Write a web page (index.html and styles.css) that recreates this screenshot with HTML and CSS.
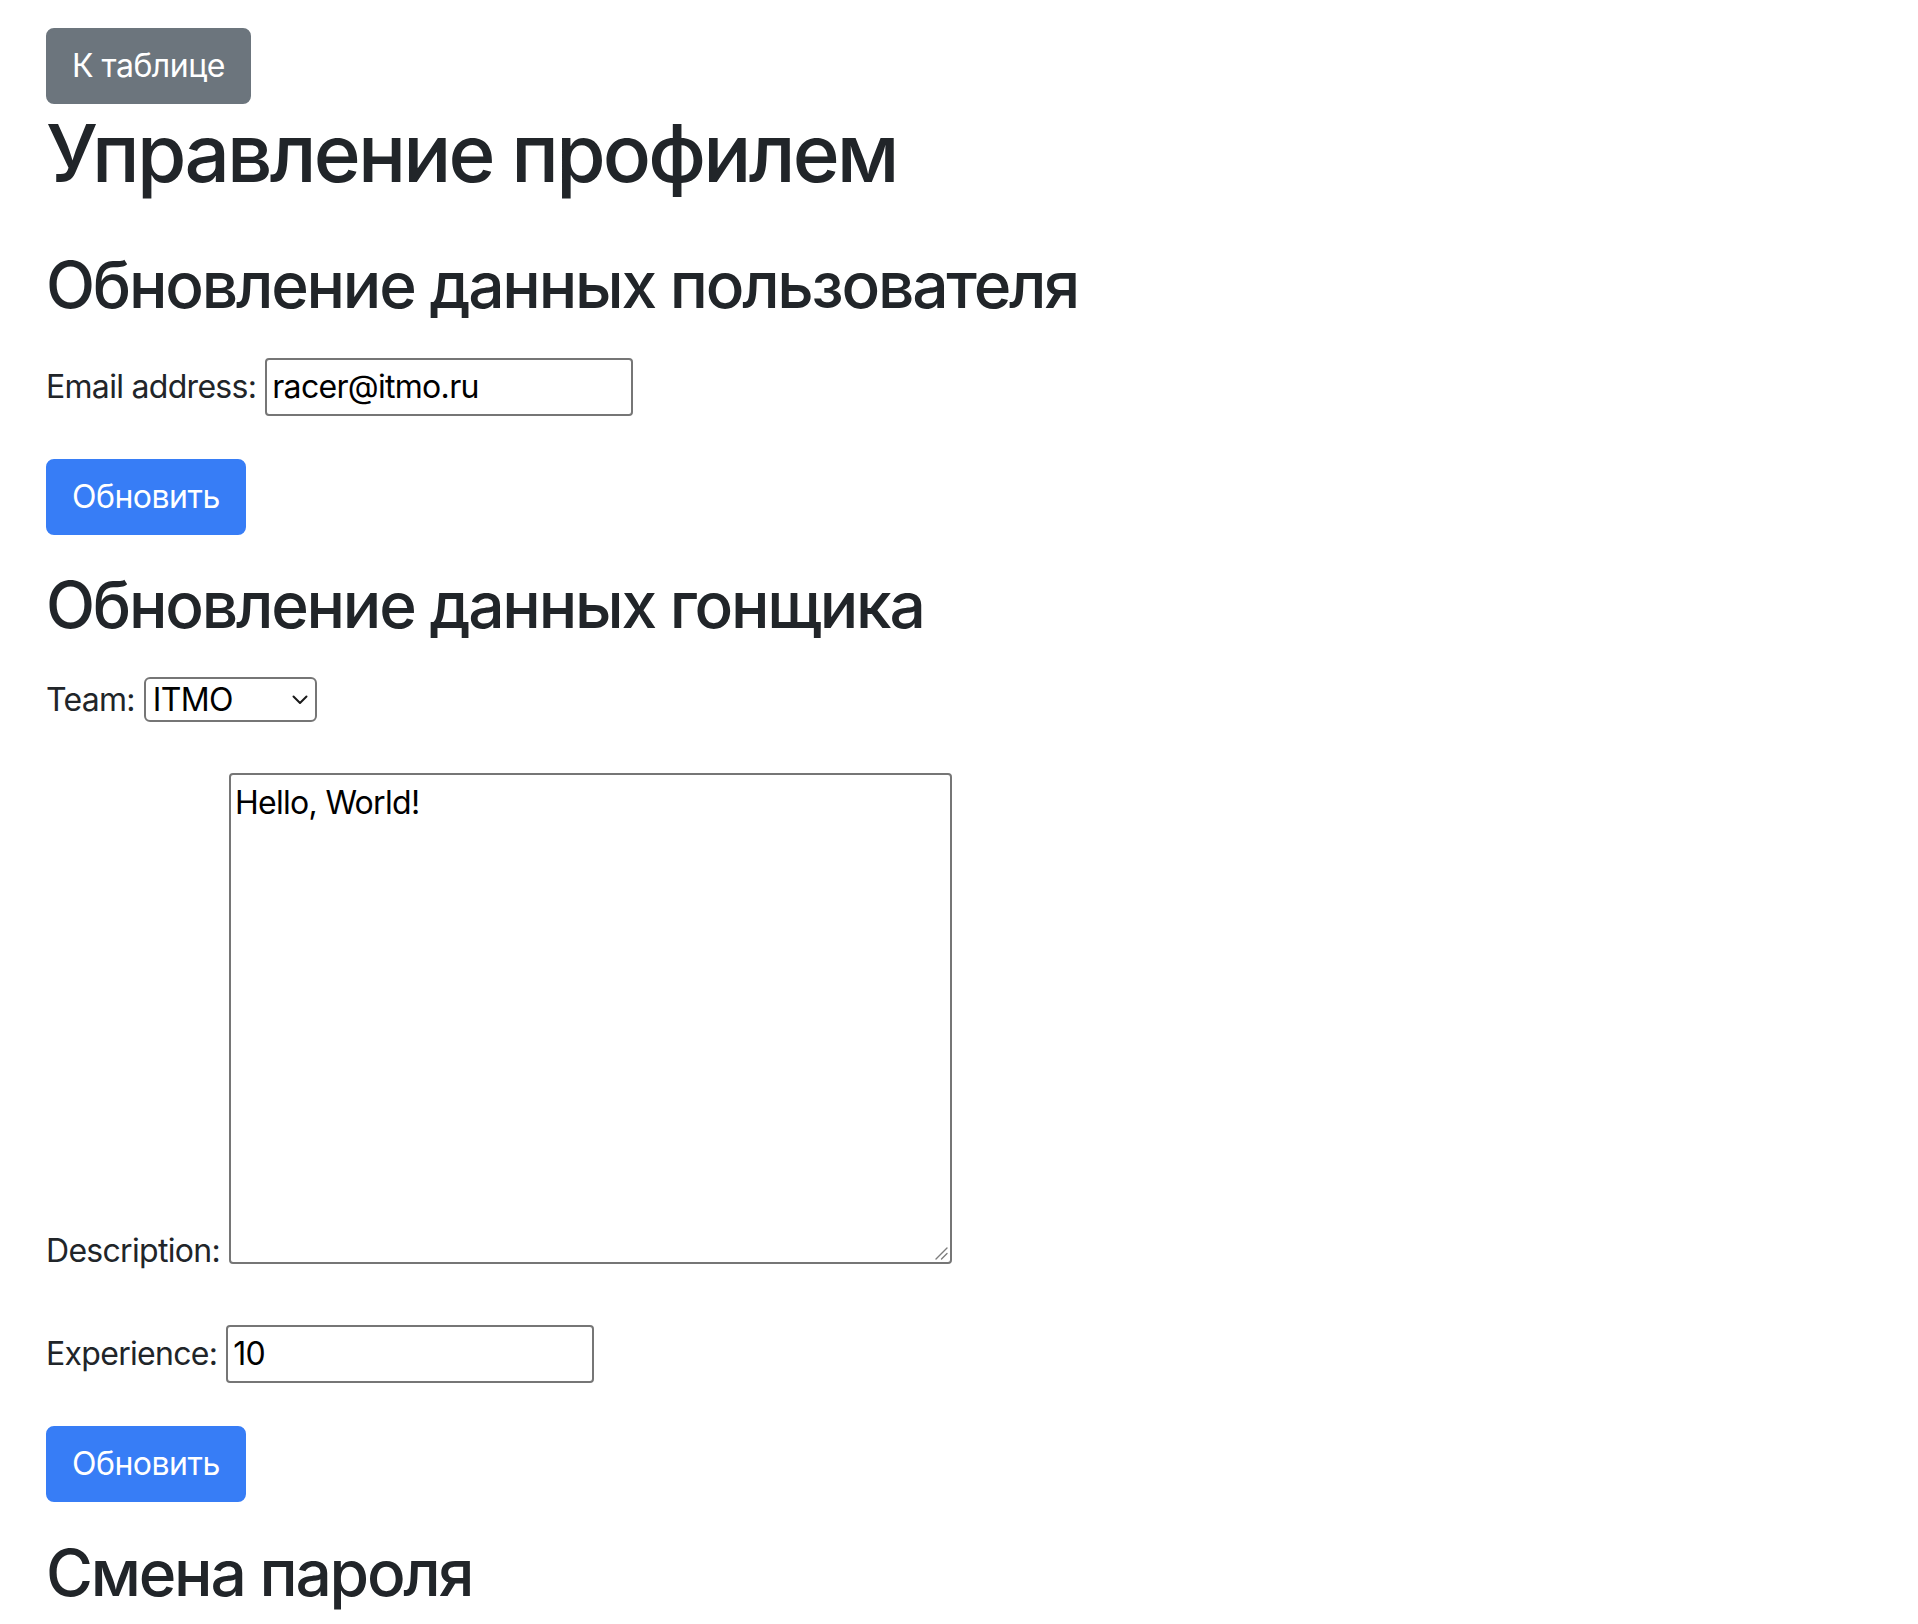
FILE: index.html
```html
<!DOCTYPE html>
<html lang="ru">
<head>
<meta charset="utf-8">
<title>Управление профилем</title>
<link rel="stylesheet" href="styles.css">
</head>
<body>
<div class="page">
  <div class="top-bar">
    <a class="btn btn-secondary" href="#">К таблице</a>
  </div>
  <h1 class="page-title">Управление профилем</h1>

  <form class="section">
    <h2 class="section-title section-title--first">Обновление данных пользователя</h2>
    <div class="field field--email">
      <label class="field-label" for="email">Email address:</label>
      <input class="text-input" id="email" type="email" value="racer@itmo.ru">
    </div>
    <button class="btn btn-primary btn-submit" type="button">Обновить</button>
  </form>

  <form class="section">
    <h2 class="section-title section-title--next">Обновление данных гонщика</h2>
    <div class="field field--team">
      <label class="field-label" for="team">Team:</label>
      <div class="select-wrap">
        <select class="select-input" id="team">
          <option>ITMO</option>
        </select>
        <svg class="select-chevron" width="16" height="10" viewBox="0 0 16 10" aria-hidden="true"><path d="M1.5 1.5 L8 8 L14.5 1.5" fill="none" stroke="#1a1a1a" stroke-width="2" stroke-linecap="round" stroke-linejoin="round"/></svg>
      </div>
    </div>
    <div class="field field--desc">
      <label class="field-label field-label--bottom" for="desc">Description:</label>
      <div class="area-wrap">
        <textarea class="text-area" id="desc">Hello, World!</textarea>
        <svg class="area-grip" width="14" height="14" viewBox="0 0 14 14" aria-hidden="true"><path d="M13 2 L2 13 M13 7.5 L7.5 13" fill="none" stroke="#7d7d7d" stroke-width="1.4" stroke-linecap="round"/></svg>
      </div>
    </div>
    <div class="field field--exp">
      <label class="field-label" for="exp">Experience:</label>
      <input class="text-input" id="exp" type="text" value="10">
    </div>
    <button class="btn btn-primary btn-submit" type="button">Обновить</button>
  </form>

  <form class="section">
    <h2 class="section-title section-title--last">Смена пароля</h2>
  </form>
</div>
</body>
</html>
```
FILE: styles.css
```css
html, body {
  margin: 0;
  padding: 0;
  background: #ffffff;
}

body {
  font-family: Inter, "Noto Sans", sans-serif;
  font-size: 32px;
  line-height: 48px;
  letter-spacing: -0.7px;
  color: #212529;
}

.page {
  padding: 0 46px 40px;
}

.top-bar {
  display: flex;
  padding-top: 28px;
}

.btn {
  display: inline-block;
  box-sizing: border-box;
  height: 76px;
  padding: 12px 24px;
  border: 2px solid transparent;
  border-radius: 8px;
  font-family: Inter, "Noto Sans", sans-serif;
  font-size: 32px;
  line-height: 48px;
  letter-spacing: -0.5px;
  font-weight: 400;
  color: #ffffff;
  text-decoration: none;
  cursor: pointer;
}

.btn-secondary {
  background: #6c757d;
  border-color: #6c757d;
}

.btn-primary {
  background: #377df6;
  border-color: #377df6;
}

.page-title {
  margin: 1px 0 0;
  font-size: 80px;
  line-height: 96px;
  font-weight: 500;
  letter-spacing: -2.8px;
}

.section {
  display: flex;
  flex-direction: column;
  align-items: flex-start;
  margin: 0;
}

.section-title {
  margin: 0;
  font-size: 64px;
  line-height: 76.8px;
  font-weight: 500;
  letter-spacing: -2.2px;
}

.section-title--first { margin-top: 46px; }
.section-title--next { margin-top: 32px; }
.section-title--last { margin-top: 33px; }

.field {
  display: flex;
  align-items: center;
  gap: 9px;
}

.field--email { margin-top: 34px; }
.field--team { margin-top: 32px; }
.field--desc { margin-top: 49px; align-items: flex-end; }
.field--exp { margin-top: 61px; }

.btn-submit { margin-top: 43px; }

.field-label {
  color: #212529;
}

.field-label--bottom {
  line-height: 26px;
}

.text-input {
  box-sizing: border-box;
  width: 368px;
  height: 58px;
  margin: 0;
  padding: 3px 5px;
  border: 2px solid #767676;
  border-radius: 4px;
  font-family: Inter, "Noto Sans", sans-serif;
  font-size: 32px;
  line-height: 48px;
  letter-spacing: -0.7px;
  color: #000000;
  background: #ffffff;
  outline: none;
}

.select-wrap {
  position: relative;
  display: flex;
}

.select-input {
  box-sizing: border-box;
  width: 173px;
  height: 45px;
  margin: 0;
  padding: 0 0 0 7px;
  border: 2px solid #767676;
  border-radius: 6px;
  font-family: Inter, "Noto Sans", sans-serif;
  font-size: 32px;
  line-height: 41px;
  letter-spacing: -0.7px;
  color: #000000;
  background: #ffffff;
  -webkit-appearance: none;
  appearance: none;
  outline: none;
}

.select-chevron {
  position: absolute;
  right: 9px;
  top: 18px;
  pointer-events: none;
}

.area-wrap {
  position: relative;
  display: flex;
}

.text-area {
  box-sizing: border-box;
  width: 723px;
  height: 491px;
  margin: 0;
  padding: 4px;
  border: 2px solid #767676;
  border-radius: 4px;
  font-family: Inter, "Noto Sans", sans-serif;
  font-size: 32px;
  line-height: 48px;
  letter-spacing: -0.7px;
  color: #000000;
  background: #ffffff;
  outline: none;
  resize: none;
}

.area-grip {
  position: absolute;
  right: 4px;
  bottom: 4px;
  pointer-events: none;
}
```
